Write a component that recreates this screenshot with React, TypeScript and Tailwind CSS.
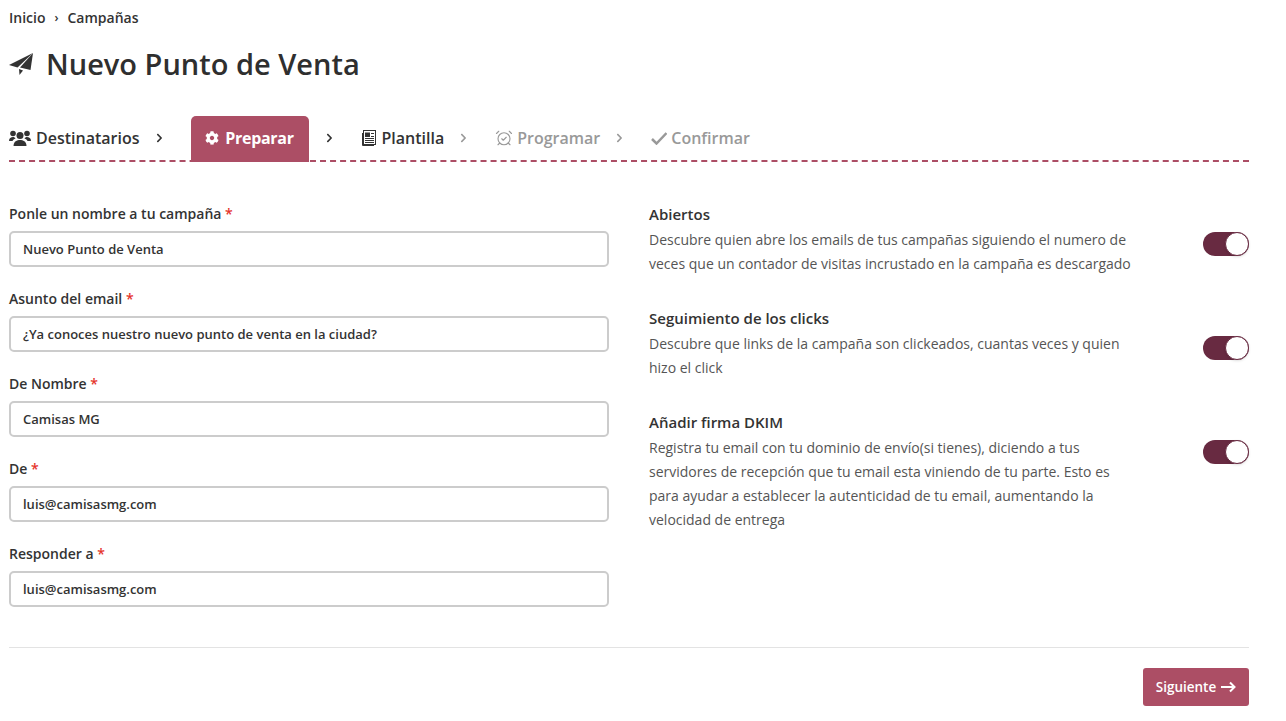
import React from "react";
import { FaCog, FaChevronRight } from "react-icons/fa";
import { LuAlarmClockCheck } from "react-icons/lu";

const fields = [
    { label: "Ponle un nombre a tu campaña", value: "Nuevo Punto de Venta" },
    { label: "Asunto del email", value: "¿Ya conoces nuestro nuevo punto de venta en la ciudad?" },
    { label: "De Nombre", value: "Camisas MG" },
    { label: "De", value: "luis@camisasmg.com" },
    { label: "Responder a", value: "luis@camisasmg.com" },
];

const options = [
    {
        title: "Abiertos",
        lines: [
            "Descubre quien abre los emails de tus campañas siguiendo el numero de",
            "veces que un contador de visitas incrustado en la campaña es descargado",
        ],
    },
    {
        title: "Seguimiento de los clicks",
        lines: [
            "Descubre que links de la campaña son clickeados, cuantas veces y quien",
            "hizo el click",
        ],
    },
    {
        title: "Añadir firma DKIM",
        lines: [
            "Registra tu email con tu dominio de envío(si tienes), diciendo a tus",
            "servidores de recepción que tu email esta viniendo de tu parte. Esto es",
            "para ayudar a establecer la autenticidad de tu email, aumentando la",
            "velocidad de entrega",
        ],
    },
];

const Chevron: React.FC<{ muted?: boolean }> = ({ muted }) => (
    <FaChevronRight className={muted ? "w-[9px] h-[10px] text-[#999]" : "w-[9px] h-[10px] text-[#333]"} />
);

const PlaneIcon = () => (
    <svg viewBox="0 0 24 22" className="w-[24px] h-[22px] text-[#333] fill-current">
        <path d="M24 0 L0 12 L8.5 14.5 Z" />
        <path d="M24 0 L11 14.5 L21.5 17 Z" />
        <path d="M10 16 L10.5 22 L14 17.5 Z" />
    </svg>
);

const UsersIcon = () => (
    <svg viewBox="0 0 22 16" className="w-[22px] h-[16px] fill-current">
        <circle cx="11" cy="5.5" r="3.5" />
        <path d="M4.5 16 C4.5 11.5 8 10 11 10 C14 10 17.5 11.5 17.5 16 Z" />
        <circle cx="4" cy="3.5" r="2.8" />
        <path d="M0 11 C0 8 2 7 4 7 C5 7 6 7.5 6.5 8.5 C5 9 4 10 3.5 11 Z" />
        <circle cx="18" cy="3.5" r="2.8" />
        <path d="M22 11 C22 8 20 7 18 7 C17 7 16 7.5 15.5 8.5 C17 9 18 10 18.5 11 Z" />
    </svg>
);

const NewspaperIcon = () => (
    <svg viewBox="0 0 15 16" className="w-[15px] h-[16px]">
        <rect x="1.5" y="0.5" width="12" height="14" fill="none" stroke="currentColor" />
        <path d="M0.5 3 V15.5 H12" fill="none" stroke="currentColor" />
        <rect x="3" y="2.5" width="5" height="4.5" fill="currentColor" />
        <path d="M9 3.5 H12 M9 6.5 H12 M3 8.5 H12 M3 10.5 H12 M3 12.5 H12" stroke="currentColor" />
    </svg>
);

const CheckIcon = () => (
    <svg viewBox="0 0 16 13" className="w-[16px] h-[13px] fill-none stroke-current stroke-[2.5]">
        <path d="M1 7 L5.5 11.5 L15.5 1" />
    </svg>
);

const Toggle: React.FC = () => (
    <div className="w-[46px] h-6 rounded-full bg-[#682a41] flex justify-end shrink-0">
        <div className="w-6 h-6 rounded-full bg-white border border-[#682a41] shadow" />
    </div>
);

export default function App() {
    return (
        <div className="w-[1286px] h-[721px] overflow-hidden bg-white pl-[9px] pr-[37px] text-[#333] font-['Open_Sans',sans-serif]">
            <div className="flex items-center h-[17px] mt-[9px] text-[14px] font-[550] leading-none">
                <span>Inicio</span>
                <span className="mx-[9px] text-[12px]">›</span>
                <span>Campañas</span>
            </div>

            <div className="flex items-center mt-[22px] h-[32px]">
                <PlaneIcon />
                <h1 className="ml-[13px] pb-[2px] text-[29px] leading-none font-semibold text-[#2f2f2f]">Nuevo Punto de Venta</h1>
            </div>

            <div className="flex items-end mt-[36px] h-[46px] border-b-2 border-dashed border-[#ac4e65] text-[16px] font-semibold">
                <div className="flex items-center h-[44px] text-[#333]">
                    <UsersIcon />
                    <span className="ml-[5px]">Destinatarios</span>
                    <span className="ml-[15px]"><Chevron /></span>
                </div>
                <div className="ml-[27px] -mb-[2px] pb-[2px] flex items-center justify-center w-[118px] h-[46px] rounded-t-[5px] bg-[#ac4e65] text-white font-bold">
                    <FaCog className="w-[14px] h-[14px]" />
                    <span className="ml-[6px] tracking-[-0.3px]">Preparar</span>
                </div>
                <div className="flex items-center h-[44px] text-[#333] ml-[16px]">
                    <Chevron />
                    <span className="ml-[28px]"><NewspaperIcon /></span>
                    <span className="ml-[5px]">Plantilla</span>
                </div>
                <div className="flex items-center h-[44px] text-[#999] ml-[15px]">
                    <Chevron muted />
                    <LuAlarmClockCheck className="ml-[27px] w-[18px] h-[18px]" strokeWidth={1.5} />
                    <span className="ml-[4px]">Programar</span>
                    <span className="ml-[15px]"><Chevron muted /></span>
                    <span className="ml-[27px]"><CheckIcon /></span>
                    <span className="ml-[4px]">Confirmar</span>
                </div>
            </div>

            <div className="flex mt-[42px]">
                <div className="w-[600px] shrink-0 flex flex-col gap-[22px]">
                    {fields.map((field) => (
                        <div key={field.label}>
                            <label className="block h-[20px] leading-[20px] text-[14px] font-semibold">
                                {field.label} <span className="text-[#e5342b]">*</span>
                            </label>
                            <div className="mt-[7px] h-[36px] px-[12px] pt-[1px] flex items-center rounded-[5px] border-2 border-[#ccc] text-[13px] font-semibold text-[#333]">
                                {field.value}
                            </div>
                        </div>
                    ))}
                </div>

                <div className="ml-[40px] flex-1 flex flex-col gap-[32px]">
                    {options.map((option) => (
                        <div key={option.title} className="flex items-start justify-between">
                            <div>
                                <div className="text-[15px] leading-[20px] font-semibold">{option.title}</div>
                                <div className="mt-[4px] text-[14px] leading-[24px] text-[#555]">
                                    {option.lines.map((line) => (
                                        <div key={line}>{line}</div>
                                    ))}
                                </div>
                            </div>
                            <div className="mt-[28px]">
                                <Toggle />
                            </div>
                        </div>
                    ))}
                </div>
            </div>

            <div className="mt-[40px] border-t border-[#e3e3e3] pt-[20px] flex justify-end">
                <button className="w-[106px] h-[38px] rounded-[3px] bg-[#ac4e65] text-white text-[13.5px] font-semibold flex items-center justify-center">
                    Siguiente
                    <svg viewBox="0 0 15 12" className="ml-[5px] w-[15px] h-[12px] fill-none stroke-white stroke-2">
                        <path d="M0 6 H13 M9 1.5 L13.5 6 L9 10.5" />
                    </svg>
                </button>
            </div>
        </div>
    );
}
